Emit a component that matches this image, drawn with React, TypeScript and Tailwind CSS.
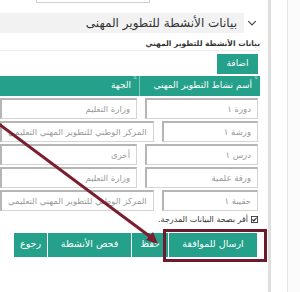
import { FunctionComponent } from 'react';

//  ---------------------------------------------------------------------------
//  DATA
//  ---------------------------------------------------------------------------

const rows = [
  { name: 'دورة ١', org: 'وزارة التعليم' },
  { name: 'ورشة ١', org: 'المركز الوطني للتطوير المهني التعليمي' },
  { name: 'درس ١', org: 'أخرى' },
  { name: 'ورقة علمية', org: 'وزارة التعليم' },
  { name: 'حقيبة ١', org: 'المركز الوطني للتطوير المهني التعليمي' },
];

const font = { fontFamily: '"DejaVu Sans", "Noto Sans", sans-serif' };

//  ---------------------------------------------------------------------------
//  UI
//  ---------------------------------------------------------------------------

const Field: FunctionComponent<{ value: string; className: string }> = ({ value, className }) => (
  <div
    className={`flex h-[21px] items-center overflow-hidden whitespace-nowrap border border-[#d4d4d4] border-l-2 border-t-2 border-l-[#b5b5b5] border-t-[#b5b5b5] bg-white px-1.5 text-[8.5px] text-[#9a9a9a] ${className}`}
  >
    {value}
  </div>
);

const SortMark = () => <span className="absolute -top-0.5 right-0.5 text-[5px] text-white/60">⇅</span>;

const App: FunctionComponent = () => {
  return (
    <div className="relative flex h-[292px] w-[300px] overflow-hidden bg-white" style={font}>
      {/* main panel */}
      <div dir="rtl" className="flex w-[268px] shrink-0 flex-col pr-[8px]">
        {/* tail of input above */}
        <div className="mr-[110px] h-[3px] w-[114px] border-x border-b border-[#cfcfcf]" />

        {/* section title */}
        <div className="mt-[10px] flex h-[20px] items-center">
          <svg viewBox="0 0 12 8" className="ml-[3px] mr-[3px] h-[6px] w-[10px] shrink-0">
            <path d="M1 1.5 L6 6.5 L11 1.5" fill="none" stroke="#444" strokeWidth="1.6" />
          </svg>
          <div className="flex h-full flex-1 items-center bg-[#f2f2f2] pr-[7px] text-[12px] text-[#333]">
            بيانات الأنشطة للتطوير المهنى
          </div>
        </div>

        {/* subtitle */}
        <div className="mt-[6px] h-[12px] border-b border-[#ececec] text-[7.5px] font-bold leading-[9px] text-[#333]">
          بيانات الأنشطة للتطوير المهني
        </div>

        {/* add button */}
        <div className="mt-[3px] flex">
          <div className="mr-[2px] flex h-[20px] w-[41px] items-center justify-center bg-[#25a08a] text-[9px] text-white">
            اضافة
          </div>
        </div>

        {/* table */}
        <div className="mt-[2px] flex h-[20px] bg-[#25a08a] text-[9px] text-white">
          <div className="relative flex w-[121px] items-center border-l border-[#7cc8ba] pr-[8px]">
            <SortMark />
            أسم نشاط التطوير المهني
          </div>
          <div className="relative flex flex-1 items-center pr-[8px]">
            <SortMark />
            الجهة
          </div>
        </div>
        <div className="mt-[2px] flex flex-col gap-[1.5px]">
          {rows.map((r) => (
            <div key={r.name} className="flex h-[21.5px] items-center">
              <div className="flex w-[121px] items-center pl-[6px] pr-[2px]">
                <Field value={r.name} className="w-full" />
              </div>
              <div className="flex flex-1 items-center pr-[2px]">
                <Field value={r.org} className="w-full" />
              </div>
            </div>
          ))}
        </div>

        {/* confirm checkbox */}
        <div className="mt-[3px] flex h-[10px] items-center gap-[3px] pr-[2px] text-[8px] leading-[10px] text-[#333]">
          <svg viewBox="0 0 8 8" className="h-[7px] w-[7px] shrink-0">
            <rect x="0.5" y="0.5" width="7" height="7" fill="#fff" stroke="#333" strokeWidth="1" />
            <path d="M1.6 4 L3.3 5.7 L6.4 2" fill="none" stroke="#222" strokeWidth="1.3" />
          </svg>
          أقر بصحة البيانات المدرجة.
        </div>

        {/* actions */}
        <div className="mt-[8px] flex h-[24px] gap-[1px] pr-[3px] text-[9.5px] text-white">
          <div className="flex w-[88px] items-center justify-center bg-[#25a08a]">ارسال للموافقة</div>
          <div className="flex w-[36px] items-center justify-center bg-[#25a08a]">حفظ</div>
          <div className="flex w-[83px] items-center justify-center bg-[#25a08a]">فحص الأنشطة</div>
          <div className="flex w-[33px] items-center justify-center bg-[#25a08a]">رجوع</div>
        </div>
      </div>

      {/* right gutter */}
      <div className="w-[3px] shrink-0 bg-[#dedede]" />
      <div className="w-[17px] shrink-0 border-r border-[#e6e6e6] bg-white" />
      <div className="flex-1 bg-[#fbfbfb]" />

      {/* annotation: highlight box */}
      <div className="absolute left-[163px] top-[229px] h-[33px] w-[104px] border-[3px] border-[#6d1a2c]" />

      {/* annotation: arrow */}
      <svg className="pointer-events-none absolute left-0 top-0" width="300" height="292">
        <line x1="-4" y1="122" x2="152" y2="238" stroke="#7a1e30" strokeWidth="3" />
        <polygon points="158,244 146,240 153,232" fill="#7a1e30" />
      </svg>
    </div>
  );
};

export default App;
